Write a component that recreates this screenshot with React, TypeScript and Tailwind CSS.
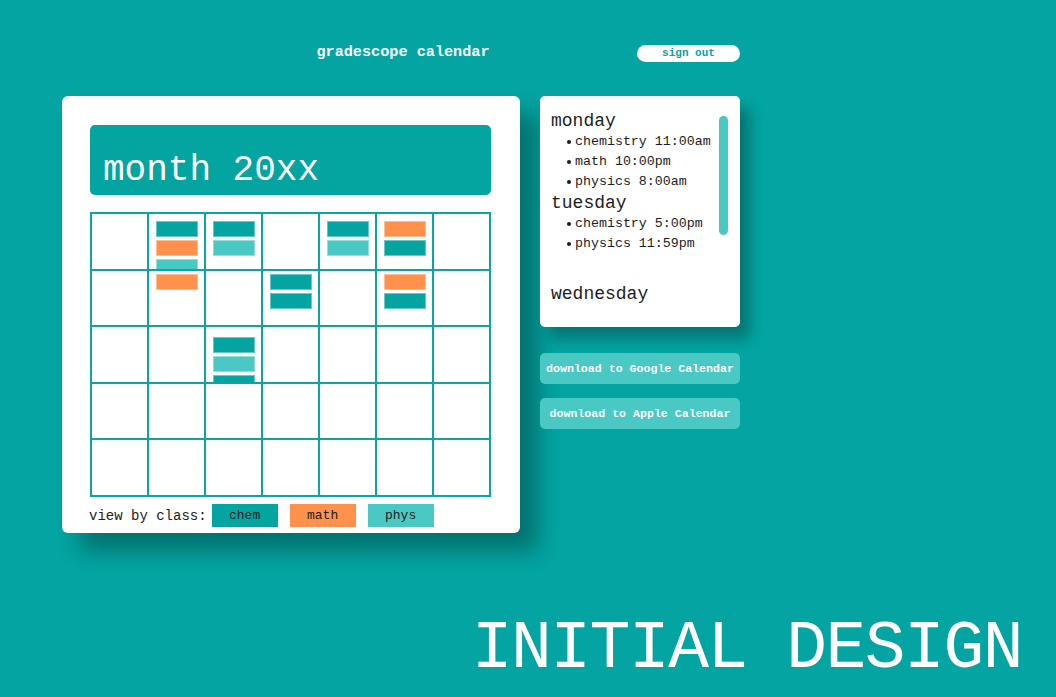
import React from 'react'

type Ev = 'teal' | 'orange' | 'light'

const evClass: Record<Ev, string> = {
    teal: 'bg-[#04a4a1]',
    orange: 'bg-[#ff914d]',
    light: 'bg-[#4ac9c4]',
}

// rows of 7 days; each day a list of events
const weeks: { pad: string; days: Ev[][] }[] = [
    { pad: 'pt-[7px]', days: [[], ['teal', 'orange', 'light'], ['teal', 'light'], [], ['teal', 'light'], ['orange', 'teal'], []] },
    { pad: 'pt-[3px]', days: [[], ['orange'], [], ['teal', 'teal'], [], ['orange', 'teal'], []] },
    { pad: 'pt-[10px]', days: [[], [], ['teal', 'light', 'teal'], [], [], [], []] },
    { pad: 'pt-[7px]', days: [[], [], [], [], [], [], []] },
    { pad: 'pt-[7px]', days: [[], [], [], [], [], [], []] },
]

const schedule = [
    { day: 'monday', items: ['chemistry 11:00am', 'math 10:00pm', 'physics 8:00am'] },
    { day: 'tuesday', items: ['chemistry 5:00pm', 'physics 11:59pm'] },
]

export default function App() {
    return (
        <div className="min-h-[697px] w-full bg-[#03a4a1] font-['Liberation_Mono',monospace] text-[#1d1d1d] flex flex-col">
            <div className="w-[678px] ml-[62px]">
                {/* Header */}
                <div className="grid grid-cols-[102px_1fr_102px] items-center pt-[44px] h-[62px]">
                    <div />
                    <h1 className="text-center text-white font-bold text-[15.2px] leading-none pl-[4px]">gradescope calendar</h1>
                    <button className="h-[17px] -ml-[1px] rounded-full bg-white text-[#03a4a1] text-[11px] font-bold leading-none">
                        sign out
                    </button>
                </div>

                <div className="flex gap-[20px] mt-[34px]">
                    {/* Calendar card */}
                    <div className="w-[458px] bg-white rounded-[6px] pt-[29px] pl-[28px] pr-[29px] pb-[6px] shadow-[18px_18px_22px_rgba(0,0,0,0.3)]">
                        <div className="h-[70px] rounded-[5px] bg-[#04a4a1] flex items-end pl-[13px] pb-[6px]">
                            <span className="text-white text-[36px] leading-none">month 20xx</span>
                        </div>

                        <div className="mt-[17px] h-[285px] grid grid-cols-7 grid-rows-5 gap-[2px] p-[2px] bg-[#0aa6a3]">
                            {weeks.map((w, wi) =>
                                w.days.map((evs, di) => (
                                    <div key={`${wi}-${di}`} className={`bg-white overflow-hidden flex flex-col items-center gap-[3px] ${w.pad}`}>
                                        {evs.map((e, ei) => (
                                            <div key={ei} className={`w-[42px] h-[16px] shrink-0 border border-white/40 ${evClass[e]}`} />
                                        ))}
                                    </div>
                                ))
                            )}
                        </div>

                        <div className="flex items-center mt-[7px] text-[14px]">
                            <span className="leading-none -ml-[1px] mr-[5px]">view by class:</span>
                            <div className="flex gap-[12px]">
                                <button className="w-[66px] h-[23px] bg-[#04a4a1] text-[13px] leading-none">chem</button>
                                <button className="w-[66px] h-[23px] bg-[#ff914d] text-[13px] leading-none">math</button>
                                <button className="w-[66px] h-[23px] bg-[#4ac9c4] text-[13px] leading-none">phys</button>
                            </div>
                        </div>
                    </div>

                    {/* Right column */}
                    <div className="w-[200px] flex flex-col">
                        <div className="relative h-[231px] bg-white rounded-[5px] pt-[14px] pl-[11px] shadow-[10px_12px_14px_rgba(0,0,0,0.28)]">
                            {schedule.map((s) => (
                                <div key={s.day}>
                                    <div className="text-[18px] leading-[22px]">{s.day}</div>
                                    <ul>
                                        {s.items.map((it) => (
                                            <li key={it} className="flex items-center pl-[16px] text-[13.3px] leading-[20px]">
                                                <span className="w-[4px] h-[4px] rounded-full bg-[#1d1d1d] mr-[4px]" />
                                                {it}
                                            </li>
                                        ))}
                                    </ul>
                                </div>
                            ))}
                            <div className="mt-[29px] text-[18px] leading-[22px]">wednesday</div>
                            <div className="absolute right-[12px] top-[20px] w-[9px] h-[119px] rounded-full bg-[#4ac9c4]" />
                        </div>

                        <button className="mt-[26px] h-[31px] rounded-[5px] bg-[#4ac9c4] text-white font-bold text-[11.6px] leading-none">
                            download to Google Calendar
                        </button>
                        <button className="mt-[14px] h-[31px] rounded-[5px] bg-[#4ac9c4] text-white font-bold text-[11.6px] leading-none">
                            download to Apple Calendar
                        </button>
                    </div>
                </div>
            </div>

            <div className="mt-auto flex justify-end pr-[34px] pb-[14px]">
                <span className="text-white text-[68px] leading-none tracking-[-1.5px]">INITIAL DESIGN</span>
            </div>
        </div>
    )
}
